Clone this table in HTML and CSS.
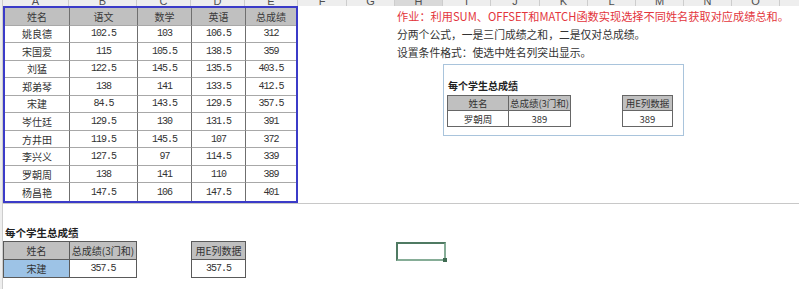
FILE: index.html
```html
<!DOCTYPE html>
<html lang="zh-CN">
<head>
<meta charset="utf-8">
<link rel="stylesheet" href="styles.css">
</head>
<body>
<div class="sheet">
  <div class="colhdr">
    <div class="ch corner"></div>
    <div class="ch"><span>A</span></div>
    <div class="ch"><span>B</span></div>
    <div class="ch"><span>C</span></div>
    <div class="ch"><span>D</span></div>
    <div class="ch"><span>E</span></div>
    <div class="ch"><span>F</span></div>
    <div class="ch"><span>G</span></div>
    <div class="ch sel"><span>H</span></div>
    <div class="ch"><span>I</span></div>
    <div class="ch"><span>J</span></div>
    <div class="ch"><span>K</span></div>
    <div class="ch"><span>L</span></div>
    <div class="ch"><span>M</span></div>
    <div class="ch"><span>N</span></div>
    <div class="ch"><span>O</span></div>
    <div class="ch last"></div>
  </div>
  <div class="main">
    <div class="rowhdr"></div>
    <div class="content">
      <div class="top">
        <div class="scores">
          <div class="c h">姓名</div><div class="c h">语文</div><div class="c h">数学</div><div class="c h">英语</div><div class="c h">总成绩</div>
          <div class="c">姚良德</div><div class="c n">102.5</div><div class="c n">103</div><div class="c n">106.5</div><div class="c n">312</div>
          <div class="c">宋国爱</div><div class="c n">115</div><div class="c n">105.5</div><div class="c n">138.5</div><div class="c n">359</div>
          <div class="c">刘猛</div><div class="c n">122.5</div><div class="c n">145.5</div><div class="c n">135.5</div><div class="c n">403.5</div>
          <div class="c">郑弟琴</div><div class="c n">138</div><div class="c n">141</div><div class="c n">133.5</div><div class="c n">412.5</div>
          <div class="c">宋建</div><div class="c n">84.5</div><div class="c n">143.5</div><div class="c n">129.5</div><div class="c n">357.5</div>
          <div class="c">岑仕廷</div><div class="c n">129.5</div><div class="c n">130</div><div class="c n">131.5</div><div class="c n">391</div>
          <div class="c">方井田</div><div class="c n">119.5</div><div class="c n">145.5</div><div class="c n">107</div><div class="c n">372</div>
          <div class="c">李兴义</div><div class="c n">127.5</div><div class="c n">97</div><div class="c n">114.5</div><div class="c n">339</div>
          <div class="c">罗朝周</div><div class="c n">138</div><div class="c n">141</div><div class="c n">110</div><div class="c n">389</div>
          <div class="c">杨昌艳</div><div class="c n">147.5</div><div class="c n">106</div><div class="c n">147.5</div><div class="c n">401</div>
        </div>
        <div class="notes">
          <p class="red">作业：利用SUM、OFFSET和MATCH函数实现选择不同姓名获取对应成绩总和。</p>
          <p>分两个公式，一是三门成绩之和，二是仅对总成绩。</p>
          <p>设置条件格式：使选中姓名列突出显示。</p>
        </div>
      </div>
      <div class="bottom">
        <div class="btitle">每个学生总成绩</div>
        <div class="brow">
          <div class="mini m1">
            <div class="mc h">姓名</div><div class="mc h">总成绩(3门和)</div>
            <div class="mc hl">宋建</div><div class="mc n">357.5</div>
          </div>
          <div class="mini m2">
            <div class="mc h">用E列数据</div>
            <div class="mc n">357.5</div>
          </div>
          <div class="selcell"><span class="handle"></span></div>
        </div>
      </div>
    </div>
  </div>
  <div class="picture">
    <div class="ptitle">每个学生总成绩</div>
    <div class="prow">
      <div class="pt p1">
        <div class="pc h">姓名</div><div class="pc h">总成绩(3门和)</div>
        <div class="pc">罗朝周</div><div class="pc">389</div>
      </div>
      <div class="pt p2">
        <div class="pc h">用E列数据</div>
        <div class="pc">389</div>
      </div>
    </div>
  </div>
</div>
</body>
</html>
```
FILE: styles.css
```css
* { box-sizing: border-box; }
html, body { margin: 0; padding: 0; background: #fff; }
body { width: 799px; height: 289px; overflow: hidden; font-family: "Noto Sans CJK SC", "Liberation Sans", sans-serif; color: #2e2e2e; }
.sheet { position: relative; width: 799px; height: 289px; overflow: hidden; }

.colhdr {
  display: grid;
  grid-template-columns: 3px 66px 68px 54px 54px 53px 49px 48px 48px 48px 49px 48px 48px 48px 48px 48px 1fr;
  height: 6px; overflow: hidden; background: #eeeeee;
}
.ch { border-right: 1px solid #cdcdcd; text-align: center; overflow: hidden; height: 6px; }
.ch span { display: block; margin-top: -6px; line-height: 14px; font: 11px/14px "Liberation Sans", sans-serif; color: #505050; }
.ch.sel { background: #d9d9d9; }
.ch.last { border-right: 0; }

.main { display: flex; }
.rowhdr { width: 3px; height: 283px; background: #eeeeee; border-right: 1px solid #cdcdcd; }
.content { flex: 1; }

.top { display: flex; height: 198px; border-bottom: 1px solid #c8c8c8; }
.scores {
  width: 295px; height: 197px; border: 2px solid #3b3bc8;
  display: grid; grid-template-columns: 65px 68px 54px 54px 1fr; grid-template-rows: repeat(11, 1fr);
  background: #fff; position: relative; z-index: 1;
}
.c { border-right: 1px solid #6f6f6f; border-bottom: 1px solid #a8a8a8; display: flex; align-items: center; justify-content: center; font-size: 10px; color: #333; }
.c:nth-child(5n) { border-right: 0; }
.c:nth-last-child(-n+5) { border-bottom: 0; }
.c.h { background: #c0c0c0; color: #3a3a3a; }
.n { font-family: "Liberation Mono", monospace; font-size: 10px; letter-spacing: -1px; }

.notes { margin-left: 99px; padding-top: 1px; }
.notes p { margin: 0; height: 18px; line-height: 18px; white-space: nowrap; font-size: 10.8px; color: #333; }
.notes p.red { color: #e3353c; font-size: 11.2px; }

.bottom { padding-top: 20px; }
.btitle { height: 17px; line-height: 17px; padding-left: 2px; font-size: 10.5px; font-weight: 700; color: #222; }
.brow { display: flex; align-items: flex-start; }
.mini { display: grid; grid-template-rows: 18px 18px; border-top: 1px solid #5a5a5a; border-left: 1px solid #5a5a5a; }
.m1 { grid-template-columns: 66px 67px; }
.m2 { grid-template-columns: 54px; margin-left: 54px; }
.mc { border-right: 1px solid #5a5a5a; border-bottom: 1px solid #5a5a5a; display: flex; align-items: center; justify-content: center; font-size: 10px; color: #333; white-space: nowrap; }
.mc.h { background: #c0c0c0; }
.mc.hl { background: #9dc3e6; }

.selcell { position: relative; margin-left: 150px; margin-top: 1px; width: 50px; height: 19px; border: 2px solid #4f7a62; border-right-color: #86ad97; border-bottom-color: #86ad97; }
.handle { position: absolute; right: -3px; bottom: -3px; width: 4px; height: 4px; background: #3f6b52; }

.picture {
  position: absolute; left: 443px; top: 64px; width: 241px; height: 72px;
  border: 1px solid #a9c4dc; background: #fff; padding: 14px 0 0 3px;
}
.ptitle { height: 14px; line-height: 14px; font-size: 10px; font-weight: 700; padding-left: 1px; color: #222; }
.prow { display: flex; margin-top: 2px; align-items: flex-start; }
.pt { display: grid; grid-template-rows: 15px 16px; border-top: 1px solid #666; border-left: 1px solid #666; }
.p1 { grid-template-columns: 61px 62px; }
.p2 { grid-template-columns: 50px; margin-left: 51px; }
.pc { border-right: 1px solid #666; border-bottom: 1px solid #666; display: flex; align-items: center; justify-content: center; font-size: 9.5px; color: #333; white-space: nowrap; }
.pc.h { background: #c0c0c0; }
```
